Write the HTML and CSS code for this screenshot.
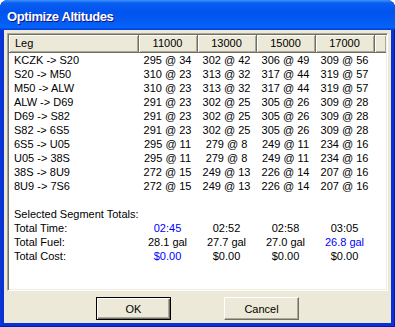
FILE: index.html
```html
<!DOCTYPE html>
<html lang="en">

<head>
    <meta charset="UTF-8">
    <title>Optimize Altitudes</title>
    <link rel="stylesheet" href="styles.css">
</head>

<body>
    <div class="window">
        <div class="titlebar">
            <span class="title">Optimize Altitudes</span>
        </div>
        <div class="client">
            <div class="listview">
                <table class="grid">
                    <colgroup>
                        <col class="col-leg">
                        <col class="col-alt">
                        <col class="col-alt">
                        <col class="col-alt">
                        <col class="col-alt">
                        <col>
                    </colgroup>
                    <thead>
                        <tr>
                            <th class="left">Leg</th>
                            <th>11000</th>
                            <th>13000</th>
                            <th>15000</th>
                            <th>17000</th>
                            <th></th>
                        </tr>
                    </thead>
                    <tbody>
                        <tr><td class="left">KCZK -&gt; S20</td><td>295 @ 34</td><td>302 @ 42</td><td>306 @ 49</td><td>309 @ 56</td><td></td></tr>
                        <tr><td class="left">S20 -&gt; M50</td><td>310 @ 23</td><td>313 @ 32</td><td>317 @ 44</td><td>319 @ 57</td><td></td></tr>
                        <tr><td class="left">M50 -&gt; ALW</td><td>310 @ 23</td><td>313 @ 32</td><td>317 @ 44</td><td>319 @ 57</td><td></td></tr>
                        <tr><td class="left">ALW -&gt; D69</td><td>291 @ 23</td><td>302 @ 25</td><td>305 @ 26</td><td>309 @ 28</td><td></td></tr>
                        <tr><td class="left">D69 -&gt; S82</td><td>291 @ 23</td><td>302 @ 25</td><td>305 @ 26</td><td>309 @ 28</td><td></td></tr>
                        <tr><td class="left">S82 -&gt; 6S5</td><td>291 @ 23</td><td>302 @ 25</td><td>305 @ 26</td><td>309 @ 28</td><td></td></tr>
                        <tr><td class="left">6S5 -&gt; U05</td><td>295 @ 11</td><td>279 @ 8</td><td>249 @ 11</td><td>234 @ 16</td><td></td></tr>
                        <tr><td class="left">U05 -&gt; 38S</td><td>295 @ 11</td><td>279 @ 8</td><td>249 @ 11</td><td>234 @ 16</td><td></td></tr>
                        <tr><td class="left">38S -&gt; 8U9</td><td>272 @ 15</td><td>249 @ 13</td><td>226 @ 14</td><td>207 @ 16</td><td></td></tr>
                        <tr><td class="left">8U9 -&gt; 7S6</td><td>272 @ 15</td><td>249 @ 13</td><td>226 @ 14</td><td>207 @ 16</td><td></td></tr>
                        <tr><td class="left"></td><td></td><td></td><td></td><td></td><td></td></tr>
                        <tr><td class="left">Selected Segment Totals:</td><td></td><td></td><td></td><td></td><td></td></tr>
                        <tr><td class="left">Total Time:</td><td class="best">02:45</td><td>02:52</td><td>02:58</td><td>03:05</td><td></td></tr>
                        <tr><td class="left">Total Fuel:</td><td>28.1 gal</td><td>27.7 gal</td><td>27.0 gal</td><td class="best">26.8 gal</td><td></td></tr>
                        <tr><td class="left">Total Cost:</td><td class="best">$0.00</td><td>$0.00</td><td>$0.00</td><td>$0.00</td><td></td></tr>
                    </tbody>
                </table>
            </div>
            <div class="buttons">
                <button class="btn default">OK</button>
                <button class="btn">Cancel</button>
            </div>
        </div>
    </div>
</body>

</html>
```

FILE: styles.css
```css
html,
body {
    margin: 0;
    padding: 0;
    background: #fff;
}

body {
    font-family: "Liberation Sans", Arial, sans-serif;
    font-size: 11px;
    color: #000;
}

.window {
    width: 395px;
    height: 327px;
    display: flex;
    flex-direction: column;
    border-radius: 8px 8px 0 0;
    overflow: hidden;
    background: #0831d9;
    box-shadow: inset -1px -1px #001ea0, inset 1px 0 #0a3ac8;
}

.titlebar {
    flex: none;
    height: 30px;
    box-sizing: border-box;
    padding: 3px 0 0 7px;
    display: flex;
    align-items: center;
    background: linear-gradient(180deg, #3d95ff 0%, #0a5ef0 10%, #0053ee 40%, #0560f6 85%, #0464ff 92%, #0048e0 96%, #0841d9 100%);
}

.title {
    color: #fff;
    font-weight: bold;
    font-size: 13px;
    letter-spacing: -0.4px;
    text-shadow: 1px 1px #0f1089;
}

.client {
    flex: 1;
    margin: 0 4px 4px 4px;
    padding: 3px 3px 3px 3px;
    background: #ece9d8;
    display: flex;
    flex-direction: column;
}

.listview {
    height: 258px;
    box-sizing: border-box;
    background: #fff;
    border: 1px solid;
    border-color: #aca899 #fff #fff #aca899;
    box-shadow: inset 1px 1px #716f64, inset -1px -1px #f1efe2;
    padding: 1px;
    overflow: hidden;
}

.grid {
    width: 100%;
    table-layout: fixed;
    border-collapse: collapse;
    border-spacing: 0;
}

.col-leg {
    width: 129px;
}

.col-alt {
    width: 59px;
}

.grid th {
    height: 17px;
    padding: 0;
    font-weight: normal;
    text-align: center;
    background: #ece9d8;
    box-shadow: inset 1px 1px #fff, inset -1px -1px #aca899;
    border-right: 1px solid #716f64;
    border-bottom: 1px solid #716f64;
    box-sizing: border-box;
}

.grid th:last-child {
    border-right: none;
}

.grid td {
    height: 14px;
    padding: 0;
    text-align: center;
    white-space: nowrap;
    line-height: 14px;
}

.grid .left {
    text-align: left;
    padding-left: 5px;
}

.grid th.left {
    padding-left: 6px;
}

.grid .best {
    color: #0000ff;
}

.buttons {
    margin-top: 6px;
    display: flex;
    justify-content: center;
    gap: 53px;
}

.btn {
    width: 75px;
    height: 23px;
    padding: 0;
    font-family: "Liberation Sans", Arial, sans-serif;
    font-size: 11px;
    color: #000;
    background: #ece9d8;
    border: 1px solid;
    border-color: #fff #716f64 #716f64 #fff;
    box-shadow: inset -1px -1px #aca899;
}

.btn.default {
    border: 1px solid #000;
    box-shadow: inset 1px 1px #fff, inset -1px -1px #716f64, inset -2px -2px #aca899;
}
```
